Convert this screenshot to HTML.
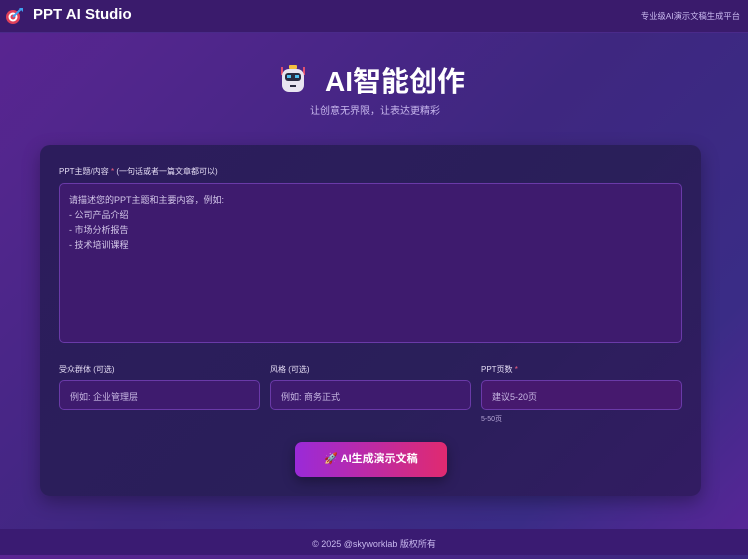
<!DOCTYPE html>
<html><head><meta charset="utf-8"><style>
*{box-sizing:border-box;margin:0;padding:0}
body{width:748px;height:555px;overflow:hidden;font-family:"Liberation Sans","Noto Sans CJK SC",sans-serif;background:linear-gradient(135deg,#5a2592 0%,#3e2780 50%,#3a2c86 80%,#5a2598 100%);position:relative;color:#fff}
.hdr{position:absolute;left:0;top:0;width:748px;height:33px;background:#3a1b6c;border-bottom:1px solid #4a2a8a}
.logo{position:absolute;left:33px;top:6px;font-size:15px;font-weight:bold}
.sub{position:absolute;right:8px;top:10px;font-size:8.3px;color:#c8b8ee}
.t{position:absolute;left:0;width:748px;text-align:center}
.card{position:absolute;left:40px;top:145px;width:661px;height:351px;border-radius:10px;background:linear-gradient(135deg,#2c1c5c,#2a1f5a 60%,#321c62);box-shadow:0 6px 18px rgba(0,0,0,.3)}
.lbl{position:absolute;font-size:8px;color:#e4dcf4}
.box{position:absolute;border:1px solid #6a3aa8;border-radius:5px;background:#3e1b6e;font-size:9px;color:#c8b8e4}
.ft{position:absolute;left:0;top:529px;width:748px;height:26px;background:#3a1b72;text-align:center;font-size:9px;color:#c8b8ee;line-height:30px}
</style></head><body>
<div class="hdr">
<svg style="position:absolute;left:5px;top:6px" width="19" height="19" viewBox="0 0 19 19"><circle cx="8" cy="11" r="7" fill="#e0405a"/><circle cx="8" cy="11" r="4.5" fill="#fff"/><circle cx="8" cy="11" r="2.5" fill="#e0405a"/><path d="M8 11L16 3" stroke="#3fa0f0" stroke-width="2"/><path d="M14 2h4v4z" fill="#3fa0f0"/></svg>
<div class="logo">PPT AI Studio</div>
<div class="sub">专业级AI演示文稿生成平台</div>
</div>
<svg style="position:absolute;left:278px;top:64px" width="30" height="30" viewBox="0 0 30 30"><rect x="3" y="3" width="2" height="8" fill="#e05070"/><rect x="25" y="3" width="2" height="8" fill="#e05070"/><rect x="11" y="1" width="8" height="4" rx="1" fill="#f5c040"/><rect x="4" y="5" width="22" height="23" rx="7" fill="#e8e4f0"/><rect x="7" y="9" width="16" height="8" rx="3" fill="#2a2a40"/><rect x="9" y="11" width="4" height="3" fill="#50c0f0"/><rect x="17" y="11" width="4" height="3" fill="#50c0f0"/><rect x="12" y="21" width="6" height="2" fill="#2a2a40"/></svg>
<div class="t" style="top:60px;font-size:28px;font-weight:bold;padding-left:42px">AI智能创作</div>
<div class="t" style="top:102px;font-size:10px;color:#c8b8ee;padding-left:2px">让创意无界限，让表达更精彩</div>
<div class="card"></div>
<div class="lbl" style="left:59px;top:166px">PPT主题/内容 <span style="color:#f06080">*</span> (一句话或者一篇文章都可以)</div>
<div class="box" style="left:59px;top:183px;width:623px;height:160px;padding:9px 9px;line-height:15px;color:#d4c8ea">请描述您的PPT主题和主要内容，例如:<br>- 公司产品介绍<br>- 市场分析报告<br>- 技术培训课程</div>
<div class="lbl" style="left:59px;top:364px">受众群体 (可选)</div>
<div class="lbl" style="left:270px;top:364px">风格 (可选)</div>
<div class="lbl" style="left:481px;top:364px">PPT页数 <span style="color:#f06080">*</span></div>
<div class="box" style="left:59px;top:380px;width:201px;height:30px;padding:9px 10px">例如: 企业管理层</div>
<div class="box" style="left:270px;top:380px;width:201px;height:30px;padding:9px 10px">例如: 商务正式</div>
<div class="box" style="left:481px;top:380px;width:201px;height:30px;padding:9px 10px;background:#46196e">建议5-20页</div>
<div class="lbl" style="left:481px;top:414px;font-size:7px;color:#b8a8d8">5-50页</div>
<div style="position:absolute;left:295px;top:442px;width:152px;height:35px;border-radius:7px;background:linear-gradient(90deg,#9a2ad8,#e02a70);box-shadow:0 4px 12px rgba(0,0,0,.35);text-align:center;line-height:35px;font-size:11px;font-weight:bold">🚀 AI生成演示文稿</div>
<div class="ft">© 2025 @skyworklab 版权所有</div>
</body></html>
